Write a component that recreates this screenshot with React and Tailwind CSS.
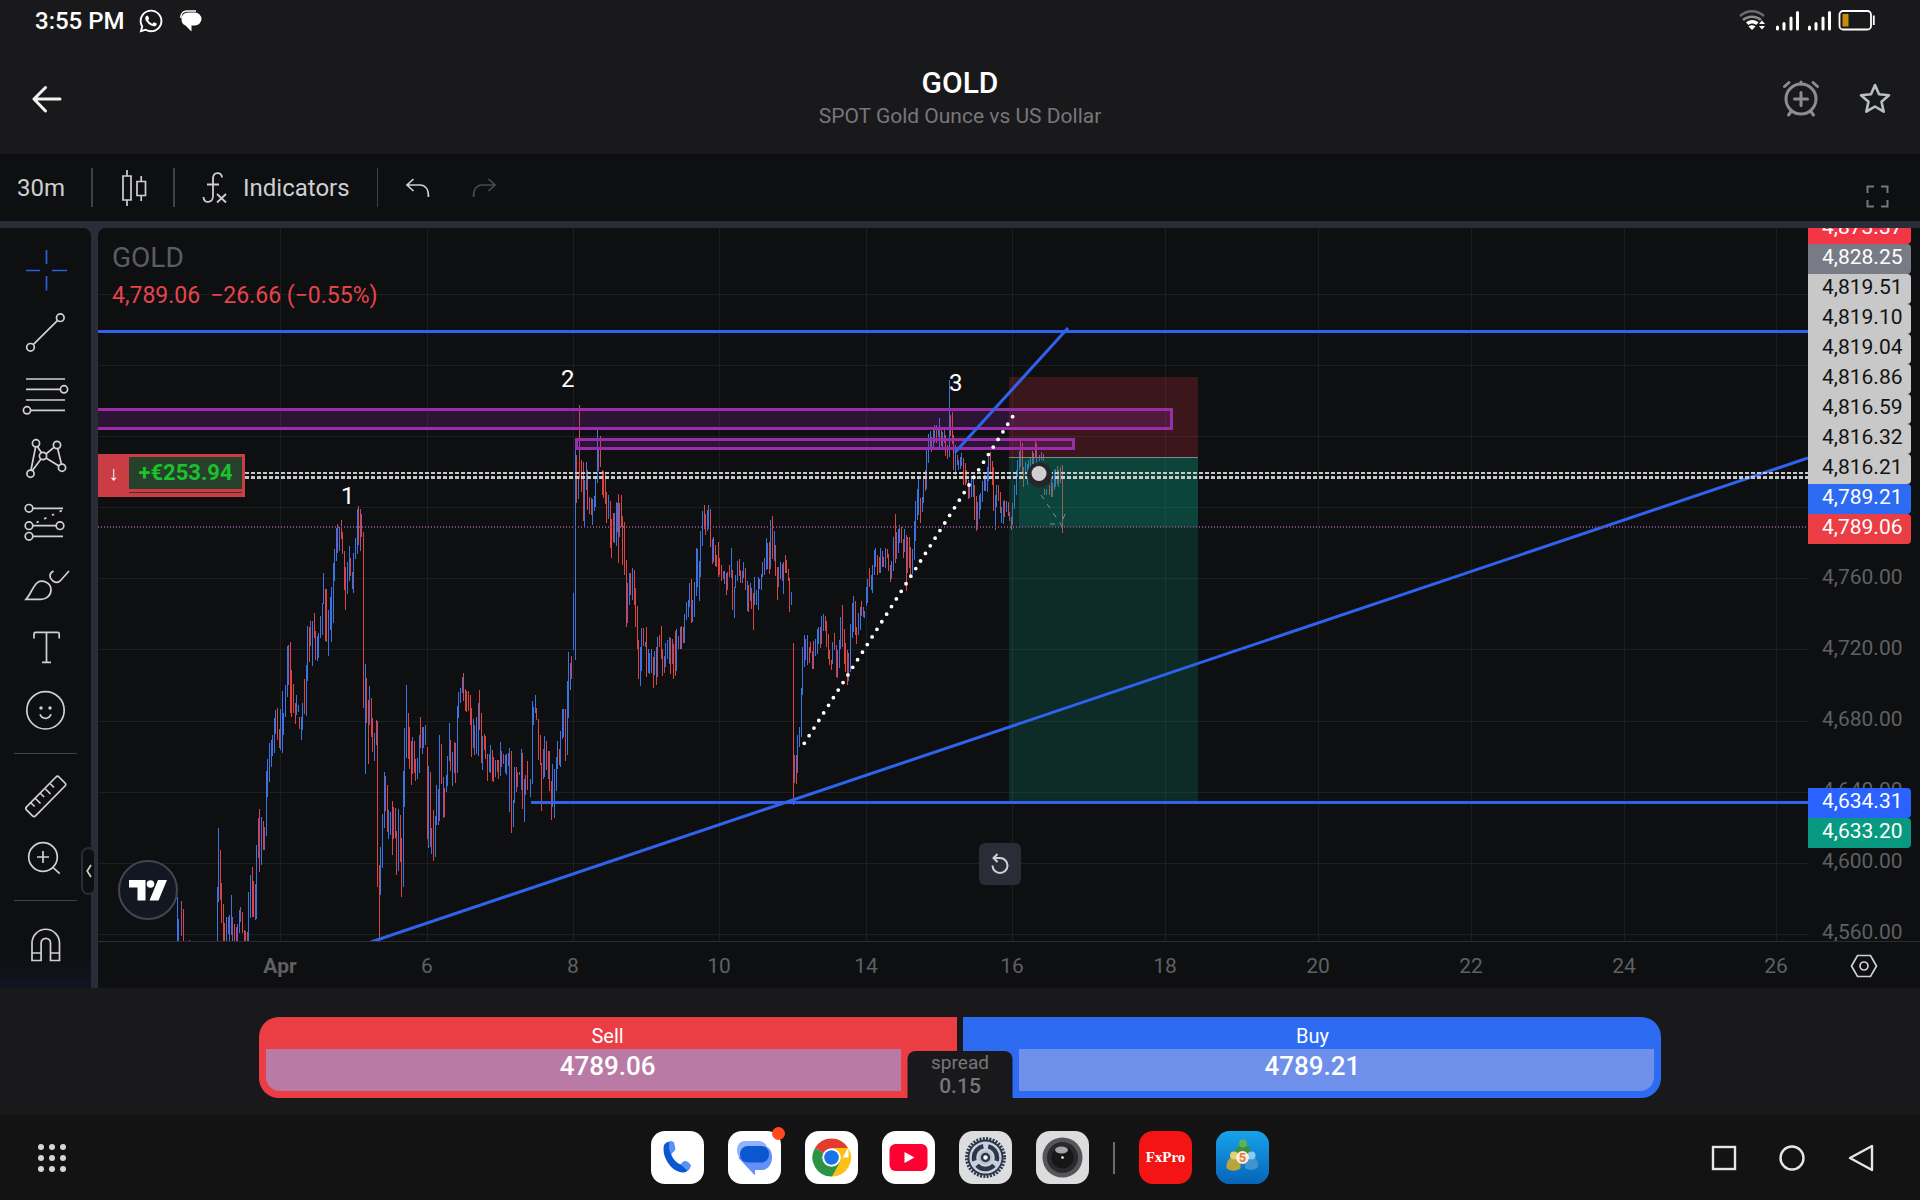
import { FaWhatsapp } from "react-icons/fa";

// Plot area in chart units
const PLOT = { x: 98, y: 228, w: 1710, h: 713 };

const TIME_TICKS = [
  { x: 280, label: "Apr", bold: true },
  { x: 427, label: "6" },
  { x: 573, label: "8" },
  { x: 719, label: "10" },
  { x: 866, label: "14" },
  { x: 1012, label: "16" },
  { x: 1165, label: "18" },
  { x: 1318, label: "20" },
  { x: 1471, label: "22" },
  { x: 1624, label: "24" },
  { x: 1776, label: "26" },
];

const PRICE_LINES = [294, 365, 436, 507, 578, 649, 721, 792, 863, 934];

const PRICE_TICKS = ["4,760.00", "4,720.00", "4,680.00", "4,640.00", "4,600.00", "4,560.00"];

const PRICE_TAGS = [
  { value: "4,828.25", className: "bg-[#787b86] text-white" },
  { value: "4,819.51", className: "bg-[#c8c8c8] text-[#131313]" },
  { value: "4,819.10", className: "bg-[#c8c8c8] text-[#131313]" },
  { value: "4,819.04", className: "bg-[#c8c8c8] text-[#131313]" },
  { value: "4,816.86", className: "bg-[#c8c8c8] text-[#131313]" },
  { value: "4,816.59", className: "bg-[#c8c8c8] text-[#131313]" },
  { value: "4,816.32", className: "bg-[#c8c8c8] text-[#131313]" },
  { value: "4,816.21", className: "bg-[#c8c8c8] text-[#131313]" },
  { value: "4,789.21", className: "bg-[#2d6bf2] text-white" },
  { value: "4,789.06", className: "bg-[#eb3d44] text-white" },
];

// Bars: "x high low colour", stored on a 1/3 unit grid from the session origin
const SESSIONS = [
  {
    x: 160,
    y: 480,
    bars: "53 1250 1384 b;55 1316 1384 b;64 1262 1368 p;70 1286 1384 r;88 1380 1384 b;172 1222 1384 b;175 1045 1266 b;181 1110 1260 r;185 1210 1330 r;190 1272 1384 r;193 1330 1384 r;199 1310 1384 b;205 1312 1362 p;208 1305 1384 b;214 1245 1366 b;217 1312 1384 p;223 1332 1384 r;230 1340 1384 p;233 1332 1384 p;238 1290 1358 b;241 1282 1325 p;247 1296 1358 r;253 1350 1384 r;256 1352 1384 p;262 1356 1384 r;265 1236 1384 b;271 1186 1314 b;277 1160 1310 r;280 1203 1312 r;286 1212 1320 p;289 1094 1318 b;295 1014 1134 p;298 988 1176 r;304 1010 1154 b;310 1024 1110 r;313 1040 1110 p;319 872 1068 b;322 836 952 b;328 788 906 b;334 780 860 b;337 766 828 b;343 714 820 b;346 690 762 b;352 684 780 r;358 748 804 r;361 686 810 b;367 634 820 b;370 700 764 b;376 614 710 b;382 498 650 b;385 494 614 p;391 486 700 r;394 570 712 r;400 612 700 r;406 668 732 r;409 645 706 b;415 676 696 b;418 712 746 r;424 712 780 b;427 668 750 b;433 598 702 r;439 556 708 b;442 438 602 b;448 440 546 r;451 424 498 p;457 424 558 b;463 400 474 r;466 452 540 r;472 468 542 b;475 458 534 b;481 408 474 b;487 370 464 b;490 280 372 b;496 328 482 r;499 326 486 r;505 390 528 b;511 350 450 b;514 320 486 b;520 248 428 b;523 208 302 b;529 144 242 b;532 132 218 p;538 142 212 b;544 120 178 r;547 155 222 r;553 212 330 r;556 262 390 r;562 246 342 b;568 198 302 b;571 234 288 r;577 276 326 p;580 218 340 b;586 174 236 b;592 86 222 b;595 78 196 r;601 86 212 p;604 102 170 r;610 156 684 r;616 552 882 b;619 594 728 r;625 660 852 r;628 618 736 b;634 654 770 r;637 714 816 r;643 758 844 b;649 720 794 p;652 724 1220 r;658 1156 1384 r;661 1102 1244 b;667 1002 1164 b;673 876 1044 b;676 888 992 p;682 916 1056 r;685 990 1076 b;691 996 1066 b;697 964 1124 r;700 980 1076 p;706 984 1074 r;709 1052 1186 r;715 988 1174 b;721 1006 1146 r;724 1074 1252 r;730 872 1220 b;733 744 980 b;739 614 834 b;745 700 836 r;748 740 866 r;754 784 916 r;757 770 882 p;763 784 880 r;766 836 902 r;772 834 898 b;778 764 878 b;781 712 804 r;787 740 822 b;790 740 804 p;796 736 796 b;802 800 1078 r;805 858 1104 b;811 876 1102 r;814 1044 1122 b;820 990 1142 r;826 1008 1132 b;829 916 1034 b;835 926 1036 p;838 766 1024 b;844 792 912 r;850 892 1014 p;853 924 1010 r;859 886 936 b;862 828 918 b;868 728 844 b;871 780 872 r;877 816 918 b;883 786 878 p;886 790 908 r;892 678 880 b;895 636 714 b;901 624 670 b;907 592 640 b;910 580 662 r;916 626 692 r;919 632 696 r;925 632 692 r;931 646 736 r;934 684 830 r;940 716 804 b;943 736 826 p;949 710 822 b;955 668 828 b;958 630 750 r;964 700 850 r;967 768 870 b;973 762 810 r;976 768 838 r;982 822 902 r;988 822 876 b;991 796 878 b;997 810 904 r;1000 830 906 r;1006 840 892 b;1012 840 876 r;1015 840 896 r;1021 786 888 b;1024 812 862 p;1030 822 852 r;1036 824 880 b;1039 822 884 b;1045 820 858 p;1048 804 996 b;1054 814 1058 r;1060 960 1040 b;1063 860 968 b;1069 862 936 r;1072 876 920 p;1078 876 886 r;1084 808 930 b;1087 818 986 r;1093 898 1026 b;1096 884 944 p;1102 842 930 r",
  },
  {
    x: 500,
    y: 360,
    bars: "91 1256 1312 b;97 1022 1272 b;100 1040 1094 b;106 1006 1060 b;109 1044 1080 r;115 1076 1200 r;121 1124 1214 r;124 1208 1352 r;130 1166 1256 p;133 1128 1250 b;139 1144 1230 r;145 1172 1258 p;148 1174 1292 r;154 1262 1380 r;157 1212 1340 b;163 1226 1374 b;169 1190 1292 b;172 1144 1226 b;178 1166 1214 r;181 1114 1220 b;187 1048 1136 b;190 1046 1132 b;196 1046 1202 r;202 962 1184 b;205 876 1074 b;211 908 990 b;214 888 956 r;220 700 870 b;226 260 900 b;229 284 430 r;235 358 416 b;238 136 356 r;238 240 300 p;244 300 396 r;250 306 484 r;253 360 500 b;259 306 390 b;262 330 450 r;268 412 462 p;274 414 466 r;277 418 494 b;283 408 452 b;286 350 440 b;292 206 368 b;295 270 332 p;301 228 322 r;307 330 406 r;310 332 414 r;316 340 432 r;319 396 490 r;325 404 476 b;331 424 564 r;334 476 594 r;340 458 546 r;343 460 548 b;349 426 558 b;352 430 516 p;355 402 608 r;358 430 530 b;364 404 500 r;367 468 614 r;373 486 644 r;379 600 800 r;382 670 788 p;388 640 736 b;391 638 704 r;397 624 720 b;403 630 734 r;406 684 802 r;412 738 868 r;415 840 956 r;421 862 978 b;424 804 932 b;430 804 858 r;436 846 860 b;439 802 952 r;445 866 940 b;448 880 942 b;454 868 938 b;460 892 984 r;463 874 944 b;469 862 974 r;472 830 952 b;478 824 862 r;484 798 896 r;487 868 948 r;493 888 940 p;496 850 922 b;502 840 898 b;508 832 912 b;511 834 942 r;517 838 912 p;520 852 958 r;526 812 948 r;529 808 934 b;535 828 868 p;541 800 868 r;544 798 866 b;550 802 850 r;553 762 850 b;559 726 780 b;565 720 770 b;568 668 742 b;574 658 788 r;577 720 786 b;583 666 770 b;589 564 708 b;592 568 682 b;598 604 724 b;601 512 650 b;607 452 558 b;613 436 508 r;616 462 524 r;622 450 514 b;625 436 506 b;631 448 560 r;637 538 612 p;640 532 606 b;646 556 618 r;649 584 622 r;655 546 652 r;658 594 646 r;664 614 664 r;670 632 658 p;673 632 672 b;679 640 704 r;682 636 690 p;688 616 652 r;694 564 654 b;697 630 750 r;703 680 774 b;706 646 684 b;712 604 664 b;718 596 648 r;721 630 668 r;727 634 670 b;730 606 654 b;736 624 690 r;742 662 754 b;745 676 756 r;751 668 724 b;754 684 748 r;760 698 810 r;763 650 736 b;769 690 734 b;775 652 750 b;778 656 686 p;784 642 690 b;787 606 650 b;793 594 644 p;799 534 630 b;802 548 626 b;808 546 642 r;811 480 628 b;817 468 598 r;823 512 602 b;826 556 648 r;832 622 720 r;835 622 680 p;841 606 656 b;847 612 664 r;850 606 702 b;856 584 640 r;859 600 640 r;865 628 664 r;868 654 756 r;874 696 734 b;880 848 1334 r;883 1186 1268 p;889 1184 1272 r;892 1124 1240 b;898 1102 1162 b;904 984 1130 b;907 860 1006 b",
  },
  {
    x: 780,
    y: 360,
    bars: "73 826 920 b;76 836 900 p;82 826 914 b;88 860 908 r;91 846 880 r;97 874 926 p;100 842 928 r;106 836 888 b;112 808 882 b;115 802 852 b;121 800 864 r;124 768 852 b;130 762 812 b;136 768 812 r;139 782 860 r;145 822 898 r;148 870 916 r;154 900 930 r;157 846 912 b;163 820 870 r;169 856 950 p;172 870 954 r;178 840 924 b;181 772 866 b;187 736 860 r;193 806 912 r;196 850 936 r;202 870 974 r;205 880 964 p;211 792 936 b;217 728 834 b;220 708 816 b;226 722 826 r;229 800 852 r;235 758 826 b;241 740 810 b;244 724 768 r;250 740 770 p;253 752 774 b;259 680 738 b;262 656 728 b;268 624 682 r;274 646 690 b;277 616 698 b;283 570 646 b;286 564 620 b;292 584 646 r;298 590 640 r;301 564 640 b;307 574 622 p;310 590 620 r;316 564 624 b;322 568 594 r;325 582 634 r;331 616 666 r;334 602 658 b;340 532 632 b;346 462 610 r;349 516 598 p;355 508 578 b;358 496 550 b;364 500 548 r;370 538 594 r;373 508 576 b;379 526 694 r;382 532 640 p;388 532 624 r;391 562 646 r;397 566 642 b;403 484 600 b;406 422 544 b;412 386 480 b;415 352 466 b;421 414 488 r;427 410 456 b;430 356 428 b;436 330 392 r;439 268 388 b;445 222 310 b;451 212 264 b;454 230 276 r;460 204 260 b;463 196 250 p;469 196 250 r;475 200 230 b;478 174 262 b;484 206 258 r;487 216 262 b;493 206 250 p;496 226 288 r;502 254 296 r;508 60 290 b;511 166 228 r;517 156 252 r;520 226 330 r;526 256 344 b;532 286 316 p;535 300 330 b;541 290 326 b;544 280 318 b;550 294 374 r;556 310 374 r;559 330 370 r;565 360 418 p;568 370 414 r;574 350 412 b;580 344 410 b;583 376 480 r;589 408 512 r;592 426 508 b;598 406 478 b;601 398 450 b;607 364 426 b;613 346 394 b;616 346 392 p;622 320 396 b;625 290 364 b;631 276 336 r;637 304 374 r;640 320 452 r;646 404 510 b;649 376 440 b;655 374 424 r;661 396 460 r;664 440 488 b;670 424 492 b;673 420 470 r;679 424 456 b;685 426 468 r;688 456 484 p;694 470 510 r;697 428 494 b;703 376 446 b;709 330 404 b;712 300 350 b;718 272 330 b;721 242 320 p;727 248 340 r;730 320 382 r;736 306 344 b;742 312 374 b;745 300 340 b;751 294 320 b;757 274 312 b;760 280 312 r;766 244 290 r;769 250 310 p;778 284 302 b;784 276 300 b;790 282 302 r;793 386 404 r;799 388 404 b;808 376 404 r;814 340 412 p;817 370 412 r;823 330 390 b;826 326 380 b;832 318 372 r;835 330 380 b;841 320 370 r;847 316 520 r",
  },
];

const barPath = (colour) =>
  SESSIONS.map((s) =>
    s.bars
      .split(";")
      .map((b) => b.split(" "))
      .filter((b) => b[3] === colour)
      .map(([x, high, low]) => {
        const px = Math.floor(s.x + x / 3) + 0.5;
        return `M${px} ${Math.round(s.y + high / 3)}V${Math.round(s.y + low / 3)}`;
      })
      .join("")
  ).join("");

const RED_BARS = barPath("r");
const BLUE_BARS = barPath("b");
const PURPLE_BARS = barPath("p");

const TOOLS = [
  {
    name: "Cross",
    icon: <path stroke="#2c5fdc" d="M46.5 11v14M46.5 37v14.5M26 31.5h14M52 31.5h15" />,
  },
  {
    name: "Trend line",
    icon: (
      <>
        <circle cx="60.3" cy="15.7" r="3.8" />
        <circle cx="30.5" cy="45.3" r="3.8" />
        <path d="M57.6 18.4 33.2 42.6" />
      </>
    ),
  },
  {
    name: "Fib retracement",
    icon: (
      <>
        <path d="M26 14h39M26 24.3h34M26 35h39M31 45.3h34" />
        <circle cx="64" cy="24.3" r="3.6" />
        <circle cx="27" cy="45.3" r="3.6" />
      </>
    ),
  },
  {
    name: "Patterns",
    icon: (
      <>
        <path d="M35.6 19 31 42M37.6 18.7l3.8 6M46 26l8-6.7M41 31l-8.6 11.6M46 30l13 8M57.7 20.7l3.7 15.3" />
        <circle cx="36" cy="15.3" r="3.6" />
        <circle cx="57" cy="17" r="3.6" />
        <circle cx="43" cy="28" r="3.6" />
        <circle cx="30.5" cy="45.7" r="3.6" />
        <circle cx="62" cy="39.7" r="3.6" />
      </>
    ),
  },
  {
    name: "Projection",
    icon: (
      <>
        <path d="M33 17.3h30M33 34.7h23M33 45.3h30" />
        <path strokeDasharray="2.5 6" d="m36.5 31.5 25.5-12" />
        <circle cx="29" cy="17.3" r="3.8" />
        <circle cx="29" cy="34.7" r="3.8" />
        <circle cx="60" cy="34.7" r="3.8" />
        <circle cx="29" cy="45.3" r="3.8" />
      </>
    ),
  },
  {
    name: "Brush",
    icon: (
      <>
        <path d="M26 45.4c5-5.4 7-14 12-17.3 4.5-2.6 13 .2 13 7.6 0 5.6-4.5 9.7-10 9.7z" />
        <path d="M53.5 17c-4.5 2.4-4.5 6-1.5 9l1 1c3.5 2.5 6 1.5 8-1L69 17" />
      </>
    ),
  },
  {
    name: "Text",
    icon: <path d="M34 21.5V17q0-1.6 1.6-1.6h22q1.6 0 1.6 1.6v4.5M46.5 15.4v30M42 45.4h9" />,
  },
  {
    name: "Icons",
    icon: (
      <>
        <circle cx="45.5" cy="30.3" r="18.7" />
        <circle cx="41" cy="28" r="1.7" fill="#d1d1d3" stroke="none" />
        <circle cx="50" cy="28" r="1.7" fill="#d1d1d3" stroke="none" />
        <path d="M40 34.3c2 5.3 9 5.3 11 0" />
      </>
    ),
  },
  { divider: true, name: "d1" },
  {
    name: "Measure",
    icon: (
      <path d="M56 13q1.5-1.5 3 0l6 6q1.5 1.5 0 3L35.5 51.8q-1.5 1.5-3 0l-6-6q-1.5-1.5 0-3zM31 39l3.7 3.5M35.5 34.5l5 5M40.5 29.5l3.7 3.5M45.5 25l5 5M50.5 20l3.5 3.5" />
    ),
  },
  {
    name: "Zoom in",
    icon: (
      <>
        <circle cx="43" cy="30" r="14.3" />
        <path d="M37 30h12M43 24v12M53 40.5l6.7 6.2" />
      </>
    ),
  },
  { divider: true, name: "d2" },
  {
    name: "Magnet",
    icon: (
      <path d="M32 49.5V32a13.7 13.7 0 0 1 27.5 0v17.5h-9V32a4.7 4.7 0 0 0-9.4 0v17.5zM32 42h9M50.5 42h9" />
    ),
  },
];

const StatusBar = () => (
  <div className="flex h-[42px] shrink-0 items-start justify-between pt-[6px] pr-[45px] pl-[35px] text-white">
    <div className="flex items-center">
      <span className="text-2xl leading-[30px] font-medium">3:55 PM</span>
      <FaWhatsapp className="ml-[13px] size-[26px]" />
      <svg className="ml-4 h-[22px] w-[22px]" viewBox="0 0 22 22" fill="none">
        <path d="M.8 8C.8 4 3 1 7 1h9" stroke="#fff" strokeWidth="1.6" />
        <path d="M8 2.500h7a6.300 6.300 0 0 1 0 13h-3.500v6L5.500 15.500C2.500 14.500 1.500 12 1.500 9 1.500 5.500 4 2.500 8 2.500z" fill="#fff" />
      </svg>
    </div>
    <svg className="mt-[3px] h-[24px] w-[136px]" viewBox="0 0 136 24" fill="none">
      <path d="M1 7C8 .5 18 .5 25 7" stroke="#6c6c6e" strokeWidth="2.5" />
      <path d="M4 11c5-4.5 13-4.5 18 0" stroke="#8c8c8e" strokeWidth="2.5" />
      <path d="M7 13.500c3-3.500 9.500-3.500 12.500 0l-2.500 2.500c-2-2-5.500-2-7.500 0z" fill="#fff" />
      <path d="m9.500 17.500 3.500 3.500 3.500-3.500c-2-1.800-5-1.800-7 0z" fill="#fff" />
      <path d="m20 15 3-3.500 3 3.500zM20 17l3 3.500 3-3.500z" fill="#fff" />
      <path
        d="M38.500 18v2M45 14.500v5.500M52 9v11M58.500 3.500V20M70.500 18v2M77 14.500v5.500M84 9v11M90.500 3.500V20"
        stroke="#fff"
        strokeWidth="3"
        strokeLinecap="round"
      />
      <rect x="100.500" y="2" width="31.500" height="18.500" rx="3.500" stroke="#fff" strokeWidth="1.8" />
      <rect x="103.500" y="5" width="6" height="12.500" fill="#c98e08" />
      <path d="M134.800 6.500v9.500" stroke="#fff" strokeWidth="1.8" />
    </svg>
  </div>
);

const Header = () => (
  <header className="grid h-[112px] shrink-0 grid-cols-[1fr_auto_1fr] items-center pt-[2px]">
    <button type="button" aria-label="Back" className="ml-[32px] w-[30px]">
      <svg className="block h-[28px] w-[30px]" viewBox="0 0 30 28" fill="none" stroke="#f2f2f2" strokeWidth="3" strokeLinecap="round" strokeLinejoin="round">
        <path d="M13.500 2.500 2 14l11.500 12M2 14h26" />
      </svg>
    </button>
    <div className="text-center">
      <h1 className="text-[30px] leading-[34px] font-medium text-white">GOLD</h1>
      <p className="text-[21px] leading-8 text-[#77777a]">SPOT Gold Ounce vs US Dollar</p>
    </div>
    <div className="mr-[28px] flex items-center justify-end gap-[38px]">
      <button type="button" aria-label="Add alert">
        <svg className="block size-[38px]" viewBox="0 0 38 38" fill="none" stroke="#8d8d8f" strokeWidth="3" strokeLinecap="round">
          <circle cx="19" cy="19" r="15" />
          <path d="M19 12.500v13M12.500 19h13M2.500 6.500 7 2.500M35.500 6.500 31 2.500M9.500 31 6.500 35M28.500 31l3 4M19 2v2" />
        </svg>
      </button>
      <button type="button" aria-label="Add to favourites">
        <svg className="block size-[34px]" viewBox="0 0 34 34" fill="none" stroke="#b9bfc6" strokeWidth="2.6" strokeLinejoin="round">
          <path d="m17 3 4 9.200 10 1-7.500 6.600 2.200 9.900-8.700-5.200-8.700 5.200 2.200-9.900L3 13.200l10-1z" />
        </svg>
      </button>
    </div>
  </header>
);

const Toolbar = () => (
  <div className="flex h-[67px] shrink-0 items-center bg-[#0e0f11] text-2xl text-[#cfcfd1]">
    <button type="button" className="w-[91px] pl-[17px] text-left">30m</button>
    <div className="h-[39px] w-[2px] bg-[#404145]" />
    <button type="button" aria-label="Chart type" className="flex w-[80px] justify-center pl-[2px]">
      <svg className="h-[36px] w-[26px]" viewBox="0 0 26 36" fill="none" stroke="#cfcfd1" strokeWidth="1.7">
        <path d="M2 6h8v24H2zM6 0v6M6 30v6M16 11.500h8.500v14H16zM20.200 6v5.500M20.200 25.500V31" />
      </svg>
    </button>
    <div className="h-[39px] w-[2px] bg-[#404145]" />
    <button type="button" className="flex w-[202px] items-center gap-4 pl-[27px]">
      <svg className="h-[32px] w-[25px]" viewBox="0 0 25 32" fill="none" stroke="#cfcfd1" strokeWidth="1.8">
        <path d="M20 5.500c0-6-9-6-9 1V24c0 7.500-9.500 8-9.500 1M5 12.500h12M15 22l9 8.500M24 22l-9 8.500" />
      </svg>
      Indicators
    </button>
    <div className="h-[39px] w-px bg-[#404145]" />
    <button type="button" aria-label="Undo" className="ml-[27px]">
      <svg className="block h-[20px] w-[25px]" viewBox="0 0 25 20" fill="none" stroke="#cfcfd1" strokeWidth="1.7">
        <path d="M8.500 1 2 7l6.500 6M2 7h13c5 0 8.500 4 8.500 12" />
      </svg>
    </button>
    <button type="button" aria-label="Redo" disabled className="ml-[42px]">
      <svg className="block h-[20px] w-[25px]" viewBox="0 0 25 20" fill="none" stroke="#4a4b4e" strokeWidth="1.7">
        <path d="M16.500 1 23 7l-6.500 6M23 7H10c-5 0-8.500 4-8.500 12" />
      </svg>
    </button>
    <button type="button" aria-label="Fullscreen" className="mt-[17px] mr-[31px] ml-auto">
      <svg className="block size-[23px]" viewBox="0 0 23 23" fill="none" stroke="#77777a" strokeWidth="2">
        <path d="M1.500 8V1.500H8M15 1.500h6.500V8M21.500 15v6.500H15M8 21.500H1.500V15" />
      </svg>
    </button>
  </div>
);

const Sidebar = () => (
  <aside className="relative flex w-[98px] shrink-0">
    <div className="flex-1 overflow-hidden rounded-tr-lg bg-[#0e0f11] bg-linear-to-b from-[#0e0f11] from-95% to-[#121420] pt-[11px]">
      {TOOLS.map((tool) =>
        tool.divider ? (
          <div key={tool.name} className="mx-[14px] my-[10px] h-px bg-[#434448]" />
        ) : (
          <button key={tool.name} type="button" aria-label={tool.name} className="block h-[63px] w-full">
            <svg className="h-[63px] w-[91px]" viewBox="0 0 91 63" fill="none" stroke="#d1d1d3" strokeWidth="1.7">
              {tool.icon}
            </svg>
          </button>
        )
      )}
    </div>
    <div className="w-[7px] bg-[#2a2d38]" />
    <button
      type="button"
      aria-label="Hide drawings toolbar"
      className="absolute right-[2px] bottom-[93px] flex h-[48px] w-[15px] items-center justify-center rounded-lg border-2 border-[#2a2d38] bg-[#0e0f11]"
    >
      <svg className="h-[14px] w-[6px] shrink-0" viewBox="0 0 6 14" fill="none" stroke="#d1d1d3" strokeWidth="1.7">
        <path d="M5 1 1.200 7 5 13" />
      </svg>
    </button>
  </aside>
);

const Plot = () => (
  <svg
    className="block h-full w-full"
    viewBox={`${PLOT.x} ${PLOT.y} ${PLOT.w} ${PLOT.h}`}
    preserveAspectRatio="none"
    fill="none"
  >
    <g stroke="#1d1e20">
      {PRICE_LINES.map((y) => (
        <path key={y} d={`M98 ${y + 0.5}H1808`} />
      ))}
      {TIME_TICKS.map((t) => (
        <path key={t.x} d={`M${t.x + 0.5} 228V941`} />
      ))}
    </g>

    <path d={RED_BARS} stroke="#dc4444" />
    <path d={BLUE_BARS} stroke="#3a74e0" />
    <path d={PURPLE_BARS} stroke="#8b53a6" />

    {/* short position */}
    <rect x="1009" y="377" width="189" height="80" fill="#f23645" fillOpacity=".2" />
    <rect x="1009" y="457" width="189" height="347" fill="#089981" fillOpacity=".2" />
    <rect x="1019" y="457" width="179" height="70" fill="#089981" fillOpacity=".22" />
    <path d="M1009 457.500h189" stroke="#7d8a88" />
    <path d="m1041 495 21 31" stroke="#6f9a94" strokeDasharray="5 6" />
    <path d="M1050 524h5M1063 519l2-5" stroke="#6f9a94" />

    {/* supply zones */}
    <rect x="90" y="409.500" width="1081.500" height="19" fill="#9c27b0" fillOpacity=".22" stroke="#9a2daa" strokeWidth="3" />
    <rect x="576.500" y="439.500" width="497" height="9" fill="#9c27b0" fillOpacity=".22" stroke="#9a2daa" strokeWidth="3" />

    {/* trend lines */}
    <g stroke="#2f63ee" strokeWidth="3">
      <path d="M98 331.500H1808M531 802.500H1808" />
      <path d="M371 942 1808 458M955 452.500 1068 328" />
    </g>

    <path d="M98 527H1808" stroke="#7d4c84" strokeWidth="2" strokeDasharray="1 2" />
    <path d="M245 473H1808" stroke="#c8c8c8" strokeWidth="2" strokeDasharray="4 2" />
    <path d="M245 477.500H1808" stroke="#c8c8c8" strokeWidth="3" strokeDasharray="4 2" />
    <path d="M804.300 743.300 1012.700 416.500" stroke="#fff" strokeWidth="3.8" strokeLinecap="round" strokeDasharray="0 9.01" />

    <circle cx="1039.500" cy="475" r="12.500" fill="#26262a" />
    <circle cx="1039" cy="473.500" r="7.500" fill="#d0d0d2" />

    <g className="fill-white font-['Roboto',sans-serif] text-2xl">
      <text x="341" y="504">1</text>
      <text x="561" y="387">2</text>
      <text x="949" y="391">3</text>
    </g>
  </svg>
);

const PriceTag = ({ value, className }) => (
  <div className={`h-[30px] rounded-r pl-[14px] text-[21px] leading-[27px] ${className}`}>{value}</div>
);

const PriceAxis = () => (
  <div className="relative w-[112px] shrink-0 overflow-hidden border-b border-[#2c2d30] pt-[314px] text-[21px] text-[#5f6063]">
    {PRICE_TICKS.map((price) => (
      <div key={price} className="flex h-[71px] items-center pl-[14px]">
        {price}
      </div>
    ))}
    <div className="absolute top-0 left-0 w-[103px]">
      <div className="flex h-[16px] flex-col justify-end overflow-hidden rounded-br bg-[#f23645] text-white">
        <PriceTag value="4,873.37" className="shrink-0" />
      </div>
      {PRICE_TAGS.map((tag) => (
        <PriceTag key={tag.value} {...tag} />
      ))}
    </div>
    <div className="absolute top-[560px] left-0 w-[103px]">
      <PriceTag value="4,634.31" className="bg-[#2962ff] text-white" />
      <PriceTag value="4,633.20" className="bg-[#089981] text-white" />
    </div>
  </div>
);

const TimeAxis = () => (
  <div className="flex h-[46px] shrink-0">
    <div className="relative flex-1">
      {TIME_TICKS.map((t) => (
        <span
          key={t.x}
          className={`absolute top-[9px] -translate-x-1/2 text-[21px] leading-[30px] text-[#5f6063] ${t.bold ? "font-bold" : ""}`}
          style={{ left: `${((t.x - PLOT.x) / PLOT.w) * 100}%` }}
        >
          {t.label}
        </span>
      ))}
    </div>
    <button type="button" aria-label="Scale settings" className="flex w-[112px] items-center justify-center pt-[2px]">
      <svg className="h-[24px] w-[28px]" viewBox="0 0 28 24" fill="none" stroke="#d1d1d3" strokeWidth="1.7">
        <path d="M7.500 1.500h13L26.500 12l-6 10.500h-13L1.500 12z" />
        <circle cx="14" cy="12" r="4" />
      </svg>
    </button>
  </div>
);

const Chart = () => (
  <section className="flex min-w-0 flex-1 flex-col rounded-tl-lg bg-[#0e0f11]">
    <div className="flex min-h-0 flex-1">
      <div className="relative min-w-0 flex-1 overflow-hidden rounded-tl-lg border-b border-[#2c2d30]">
        <Plot />
        <div className="absolute top-[12px] left-[14px]">
          <h2 className="text-[28px] leading-9 text-[#5c5d60]">GOLD</h2>
          <p className="flex gap-[10px] text-[23px] leading-10 text-[#e8434c]">
            <span>4,789.06</span>
            <span>−26.66 (−0.55%)</span>
          </p>
        </div>

        <button type="button" className="absolute top-[226px] left-0 flex h-[43px] w-[147px] bg-[#cb3d44]">
          <span className="w-[31px] text-xl leading-[38px] text-white">↓</span>
          <span className="mt-[3px] h-[32px] w-[113px] bg-[#26402b] text-[22px] leading-[32px] font-bold text-[#1cc12b]">
            +€253.94
          </span>
          <span className="absolute right-[3px] bottom-[4px] h-px w-[113px] bg-[#5a2226]" />
        </button>

        <div className="absolute bottom-[21px] left-[20px] flex size-[60px] items-center justify-center rounded-full border-2 border-[#434651] bg-[#131722]">
          <svg className="h-[21px] w-[38px]" viewBox="0 0 38 21" fill="#fff">
            <path d="M0 0h16.500v20.500h-8v-13H0zM29 0h9l-8.500 20.500h-9z" />
            <circle cx="21.500" cy="4" r="3.800" />
          </svg>
        </div>

        <button
          type="button"
          aria-label="Reset chart view"
          className="absolute bottom-[56px] left-[881px] flex size-[42px] items-center justify-center rounded-md bg-[#2a2d38]"
        >
          <svg className="size-[24px]" viewBox="0 0 24 24" fill="none" stroke="#d1d1d3" strokeWidth="2">
            <path d="M5.500 6H12a7.500 7.500 0 1 1-7.500 7.500M9.500 2l-4 4 4 4" />
          </svg>
        </button>
      </div>
      <PriceAxis />
    </div>
    <TimeAxis />
  </section>
);

const TradeBar = () => (
  <div className="h-[127px] shrink-0 pt-[29px]">
    <div className="relative mx-auto grid h-[81px] w-[73%] grid-cols-2 gap-[6px]">
      <button type="button" className="flex flex-col rounded-l-[20px] bg-[#eb3d44] pr-[56px] pb-[7px] pl-[7px] text-white">
        <span className="h-[32px] w-full pl-[48px] text-xl leading-[38px]">Sell</span>
        <span className="w-full flex-1 rounded-bl-[14px] bg-[#b97ba6] pl-[48px] text-center text-[26px] leading-[35px] font-medium">
          4789.06
        </span>
      </button>
      <button type="button" className="flex flex-col rounded-r-[20px] bg-[#2d6bf2] pr-[7px] pb-[7px] pl-[56px] text-white">
        <span className="h-[32px] w-full pr-[48px] text-xl leading-[38px]">Buy</span>
        <span className="w-full flex-1 rounded-br-[14px] bg-[#6e90eb] pr-[48px] text-center text-[26px] leading-[35px] font-medium">
          4789.21
        </span>
      </button>
      <div className="absolute bottom-0 left-1/2 h-[47px] w-[105px] -translate-x-1/2 rounded-t-lg bg-[#19191b] text-center text-[#77777a]">
        <p className="text-[19px] leading-[24px]">spread</p>
        <p className="text-[21px] leading-[22px] font-medium">0.15</p>
      </div>
    </div>
  </div>
);

const PhoneIcon = () => (
  <svg className="size-[53px]" viewBox="0 0 53 53">
    <path d="M13 14c2-3 5-4 8-3.500l3 8-4 4.500c1.500 4.500 5 8.500 9.500 10.500l4-3.500 6 4c-.5 4-3 7-7 7.500C22 42 10 27 13 14z" fill="#0b57d0" />
    <path d="M18.500 11c2-.8 4-.5 4.500.5l1.500 6c0 2-3 4-4.500 5.500-2-3-2.500-8-1.500-12zM33.500 30c2-.5 5.500 2 6 4s-1 4.500-3 6c-2-2.500-5-4.500-7-6.500 1.500-1 2.500-3 4-3.500z" fill="#5b93f5" />
  </svg>
);

const MessagesIcon = () => (
  <svg className="size-[53px]" viewBox="0 0 53 53">
    <path d="M17 10h13c5 0 8 2.500 9 6L14 29C7 25 7 10 17 10z" fill="#8fb2fb" />
    <path d="M22 15h13c6 0 9 5 9 11.500S40 39 34 39h-7v5.500L10.500 27z" fill="#6590f8" />
    <rect x="12" y="15" width="29" height="16.500" rx="8" fill="#0b57d0" />
  </svg>
);

const ChromeIcon = () => (
  <svg className="size-[53px]" viewBox="0 0 53 53">
    <path d="M26.500 26.500 10 17a19 19 0 0 1 33 0z" fill="#e33b2e" />
    <path d="M26.500 26.500H43.500V17a19 19 0 0 1-16.500 28.500z" fill="#fbc116" />
    <path d="M26.500 26.500 34.700 31.500 27 45.500A19 19 0 0 1 10 17z" fill="#2c9346" />
    <path d="M26.500 17H43l-8 14.300z" fill="#fbc116" />
    <circle cx="26.500" cy="26.500" r="9.300" fill="#fff" />
    <circle cx="26.500" cy="26.500" r="7.300" fill="#1a73e8" />
  </svg>
);

const YoutubeIcon = () => (
  <svg className="size-[53px]" viewBox="0 0 53 53">
    <rect x="7.500" y="13" width="38" height="27" rx="6" fill="#ff0033" />
    <path d="m22.500 21 10 5.500-10 5.500z" fill="#fff" />
  </svg>
);

const SettingsIcon = () => (
  <svg className="size-[53px]" viewBox="0 0 53 53" fill="none" stroke="#2d3748">
    <circle cx="26.500" cy="26.500" r="17" fill="#c9d1de" stroke="none" />
    <circle cx="26.500" cy="26.500" r="18.500" strokeWidth="4" strokeDasharray="1.9 1.33" />
    <circle cx="26.500" cy="26.500" r="17" strokeWidth="1.8" />
    <circle cx="26.500" cy="26.500" r="11.500" strokeWidth="4.500" strokeDasharray="19 5.080" strokeDashoffset="-8.500" />
    <circle cx="26.500" cy="26.500" r="7" fill="#bcc1c9" stroke="none" />
    <circle cx="26.500" cy="26.500" r="3.500" fill="#fff" strokeWidth="2.500" />
  </svg>
);

const CameraIcon = () => (
  <svg className="size-[53px]" viewBox="0 0 53 53">
    <circle cx="26.500" cy="26.500" r="20" fill="#55555c" />
    <circle cx="26.500" cy="26.500" r="15.500" fill="#2a2a2c" />
    <circle cx="26.500" cy="26.500" r="11" fill="#171718" />
    <ellipse cx="25.500" cy="19" rx="6.500" ry="3.500" fill="#a5a5a7" />
    <circle cx="26.500" cy="26.500" r="1.300" fill="#fff" />
  </svg>
);

const MetaTraderIcon = () => (
  <svg className="size-[53px]" viewBox="0 0 53 53">
    <defs>
      <linearGradient id="mtSky" x1="0" y1="0" x2="0" y2="1">
        <stop offset="0" stopColor="#17a3ea" />
        <stop offset="1" stopColor="#0764b8" />
      </linearGradient>
    </defs>
    <rect width="53" height="53" fill="url(#mtSky)" />
    <path d="M19 23c0-6 3-9 8-9s8 3 8 9l-4 5h-8z" fill="#3c8f45" />
    <circle cx="27" cy="12.500" r="4" fill="#5bb455" />
    <path d="M10.500 37c-.5-7 3-11 7.500-11s7 5 6.500 11c-3 3.500-11 3.500-14 0z" fill="#b9a43a" />
    <circle cx="18" cy="24.500" r="4" fill="#e3d06a" />
    <path d="M29 37c-.5-6 2-11 6.500-11s7 4 6.500 10c-3 3.500-10 3.500-13 1z" fill="#3f93cf" />
    <circle cx="35.500" cy="24.500" r="4" fill="#8ccbee" />
    <circle cx="26.500" cy="26.500" r="6.500" fill="#f6efe6" />
    <text x="26.500" y="31" textAnchor="middle" className="fill-[#ea7a2c] font-['Roboto',sans-serif] text-[13px] font-bold">
      5
    </text>
  </svg>
);

const APPS = [
  { name: "Phone", bg: "bg-white", icon: <PhoneIcon /> },
  { name: "Messages", bg: "bg-white", icon: <MessagesIcon />, badge: true },
  { name: "Chrome", bg: "bg-white", icon: <ChromeIcon /> },
  { name: "YouTube", bg: "bg-white", icon: <YoutubeIcon /> },
  { name: "Settings", bg: "bg-[#dcdddf]", icon: <SettingsIcon /> },
  { name: "Camera", bg: "bg-[#dcdcdc]", icon: <CameraIcon /> },
];

const AppButton = ({ name, bg, icon, badge }) => (
  <button type="button" aria-label={name} className="relative size-[53px]">
    <span className={`flex size-[53px] items-center justify-center overflow-hidden rounded-[14px] ${bg}`}>{icon}</span>
    {badge && <span className="absolute -top-1 -right-1 size-[13px] rounded-full bg-[#ff4a1f]" />}
  </button>
);

const NavBar = () => (
  <nav className="grid h-[85px] shrink-0 grid-cols-[1fr_auto_1fr] items-center bg-[#131313]">
    <button type="button" aria-label="All apps" className="ml-[37px] w-[30px]">
      <svg className="block size-[30px]" viewBox="0 0 30 30" fill="#d6d6d6">
        {[4, 15, 26].map((y) => [4, 15, 26].map((x) => <circle key={`${x}-${y}`} cx={x} cy={y} r="3" />))}
      </svg>
    </button>
    <div className="flex items-center gap-6">
      {APPS.map((app) => (
        <AppButton key={app.name} {...app} />
      ))}
      <div className="h-[32px] w-[2px] bg-[#6d6d6d]" />
      <AppButton
        name="FxPro"
        bg="bg-[#f51414]"
        icon={<span className="font-['Liberation_Serif',serif] text-[15px] font-bold text-white">FxPro</span>}
      />
      <AppButton name="MetaTrader 5" bg="bg-[#0a7fd0]" icon={<MetaTraderIcon />} />
    </div>
    <div className="mr-[45px] flex items-center justify-end gap-[42px]">
      <button type="button" aria-label="Recents">
        <svg className="block size-[26px]" viewBox="0 0 26 26" fill="none" stroke="#e6e6e6" strokeWidth="2.4">
          <rect x="2" y="2" width="22" height="22" />
        </svg>
      </button>
      <button type="button" aria-label="Home">
        <svg className="block size-[26px]" viewBox="0 0 26 26" fill="none" stroke="#e6e6e6" strokeWidth="2.4">
          <circle cx="13" cy="13" r="11.500" />
        </svg>
      </button>
      <button type="button" aria-label="Back">
        <svg className="block size-[28px]" viewBox="0 0 28 28" fill="none" stroke="#e6e6e6" strokeWidth="2.4" strokeLinejoin="round">
          <path d="M25 2v24L3 14z" />
        </svg>
      </button>
    </div>
  </nav>
);

const App = () => {
  return (
    <div className="flex h-screen min-h-[1000px] flex-col bg-[#19191b] font-['Roboto',sans-serif]">
      <StatusBar />
      <Header />
      <Toolbar />
      <main className="flex min-h-0 flex-1 bg-[#2a2d38] pt-[7px]">
        <Sidebar />
        <Chart />
      </main>
      <TradeBar />
      <NavBar />
    </div>
  );
};

export default App;
